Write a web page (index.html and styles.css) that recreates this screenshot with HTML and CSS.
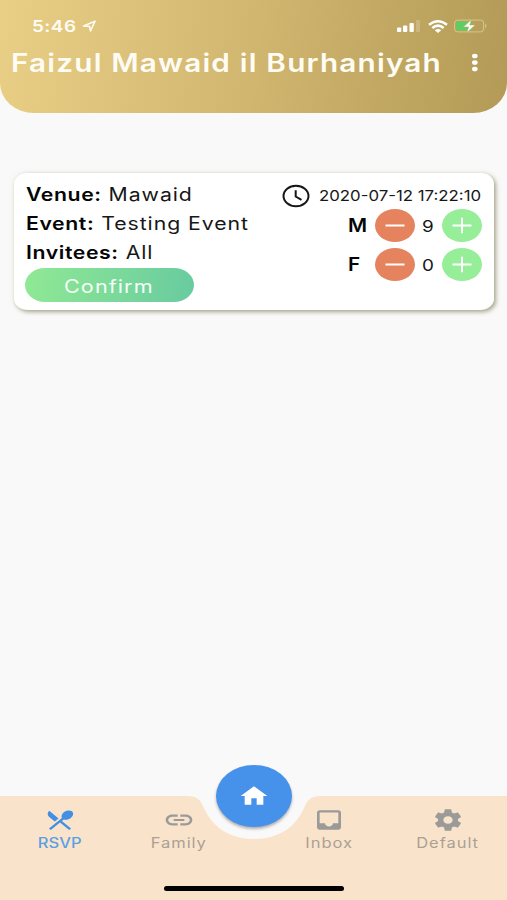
FILE: index.html
```html
<!DOCTYPE html>
<html lang="en">
<head>
<meta charset="utf-8">
<title>Faizul Mawaid il Burhaniyah</title>
<link rel="stylesheet" href="styles.css">
</head>
<body>
<div class="app">
  <header class="header">
    <div class="status">
      <span class="wide time">5:46</span>
      <svg class="location" width="15" height="13" viewBox="0 0 15 13"><path d="M1.5 6 13 1.2 8.500 11 7.500 6.400z" fill="none" stroke="#fffbf0" stroke-width="1.6" stroke-linejoin="round"/></svg>
      <svg class="signal" width="24" height="12" viewBox="0 0 24 12" fill="#fff"><rect x="0" y="7.5" width="4.300" height="4.5" rx="1"/><rect x="6" y="5.5" width="4.300" height="6.5" rx="1"/><rect x="12.500" y="3" width="4.300" height="9" rx="1"/><rect x="19" y="0" width="4" height="12" rx="1" opacity=".2"/></svg>
      <svg class="wifi" width="20" height="13" viewBox="0 0 20 13" fill="none" stroke="#fff" stroke-width="2.500"><path d="M1 4.800Q10-2.200 19 4.800M4.300 8Q10 3.200 15.700 8"/><path d="M6.700 10.200Q10 7.600 13.300 10.200L10 13z" fill="#fff" stroke="none"/></svg>
      <svg class="battery" width="34" height="14" viewBox="0 0 34 14"><rect x=".6" y="1.100" width="29" height="11.800" rx="3" fill="none" stroke="#e2d3a4" stroke-opacity=".75"/><path d="M4 2.500h14v9H4q-2 0-2-2v-5q0-2 2-2z" fill="#5fce62"/><path d="M31.200 4.600q2.600 2.400 0 4.800z" fill="#e2d3a4" opacity=".8"/><path d="M17.500.6 9.300 8h5.200l-1.600 5.600L21.300 6h-5.500z" fill="#fff" stroke="#bda660" stroke-width=".6"/></svg>
    </div>
    <div class="titlebar">
      <h1 class="wide title">Faizul Mawaid il Burhaniyah</h1>
      <svg class="more" width="8" height="20" viewBox="0 0 8 20" fill="#fff"><ellipse cx="3.800" cy="3" rx="2.800" ry="2.300"/><ellipse cx="3.800" cy="9.500" rx="2.800" ry="2.300"/><ellipse cx="3.800" cy="16" rx="2.800" ry="2.300"/></svg>
    </div>
  </header>
  <main class="content">
    <article class="card">
      <div class="details">
        <p class="wide line"><b>Venue:</b> Mawaid</p>
        <p class="wide line"><b>Event:</b> Testing Event</p>
        <p class="wide line"><b>Invitees:</b> All</p>
        <button class="confirm"><span class="wide">Confirm</span></button>
      </div>
      <div class="side">
        <div class="date">
          <svg width="28" height="24" viewBox="0 0 28 24" fill="none" stroke="#161616" stroke-width="2"><ellipse cx="14" cy="12" rx="12.500" ry="10.300"/><path d="M13.700 6.300v6.200l5.800 3.300"/></svg>
          <time class="wide">2020-07-12 17:22:10</time>
        </div>
        <div class="counter">
          <b class="wide sex">M</b>
          <button class="round minus"><svg width="40" height="33" viewBox="0 0 40 33"><path d="M10.500 16.500h19"/></svg></button>
          <span class="wide count">9</span>
          <button class="round plus"><svg width="40" height="33" viewBox="0 0 40 33"><path d="M10.500 16.500h19M20 8.700v15.600"/></svg></button>
        </div>
        <div class="counter">
          <b class="wide sex">F</b>
          <button class="round minus"><svg width="40" height="33" viewBox="0 0 40 33"><path d="M10.500 16.500h19"/></svg></button>
          <span class="wide count">0</span>
          <button class="round plus"><svg width="40" height="33" viewBox="0 0 40 33"><path d="M10.500 16.500h19M20 8.700v15.600"/></svg></button>
        </div>
      </div>
    </article>
  </main>
  <nav class="tabbar">
    <svg class="shape" width="507" height="104" viewBox="0 0 507 104"><path d="M0 0H187C196 0 200 3 203 10C212 31 229 43 254 43S296 31 305 10C308 3 312 0 321 0H507V104H0z" fill="#f9e4cb"/></svg>
    <a class="tab active">
      <svg width="32" height="26" viewBox="0 0 24 24" preserveAspectRatio="none"><path d="m8.100 13.340 2.830-2.830L3.910 3.500a4.008 4.008 0 0 0 0 5.660l4.190 4.180zm6.780-1.810c1.530.71 3.680.21 5.270-1.380 1.910-1.910 2.280-4.650.81-6.120-1.460-1.460-4.200-1.100-6.120.81-1.590 1.590-2.090 3.740-1.380 5.270L3.700 19.870l1.410 1.410L12 14.410l6.880 6.880 1.410-1.410L13.410 13l1.470-1.470z"/></svg>
      <span class="wide">RSVP</span>
    </a>
    <a class="tab">
      <svg width="32" height="26" viewBox="0 0 24 24" preserveAspectRatio="none"><path d="M3.900 12c0-1.710 1.390-3.100 3.100-3.100h4V7H7c-2.760 0-5 2.240-5 5s2.240 5 5 5h4v-1.900H7c-1.710 0-3.100-1.390-3.100-3.100zM8 13h8v-2H8v2zm9-6h-4v1.900h4c1.710 0 3.100 1.390 3.100 3.100s-1.390 3.100-3.100 3.100h-4V17h4c2.760 0 5-2.240 5-5s-2.240-5-5-5z"/></svg>
      <span class="wide">Family</span>
    </a>
    <button class="home"><svg width="32" height="26" viewBox="0 0 24 24" preserveAspectRatio="none"><path d="M10 20v-6h4v6h5v-8h3L12 3 2 12h3v8z"/></svg></button>
    <a class="tab inbox">
      <svg width="32" height="26" viewBox="0 0 24 24" preserveAspectRatio="none"><path d="M19 3H4.990c-1.110 0-1.980.89-1.980 2L3 19c0 1.100.88 2 1.990 2H19c1.100 0 2-.9 2-2V5c0-1.110-.9-2-2-2zm0 12h-4c0 1.660-1.350 3-3 3s-3-1.340-3-3H4.990V5H19v10z"/></svg>
      <span class="wide">Inbox</span>
    </a>
    <a class="tab">
      <svg width="32" height="26" viewBox="0 0 24 24" preserveAspectRatio="none"><path d="M19.430 12.980c.04-.32.070-.64.070-.98s-.03-.66-.07-.98l2.110-1.650c.19-.15.240-.42.120-.64l-2-3.460c-.12-.22-.39-.3-.61-.22l-2.490 1c-.52-.4-1.080-.73-1.690-.98l-.38-2.650C14.460 2.180 14.250 2 14 2h-4c-.25 0-.46.18-.49.42l-.38 2.650c-.61.250-1.170.59-1.690.98l-2.490-1c-.23-.09-.49 0-.61.220l-2 3.460c-.13.220-.07.490.12.640l2.110 1.650c-.04.320-.07.650-.07.980s.03.660.07.980l-2.110 1.650c-.19.150-.24.420-.12.640l2 3.460c.12.220.39.300.61.220l2.490-1c.52.400 1.080.730 1.690.980l.38 2.650c.03.240.24.420.49.420h4c.25 0 .46-.18.490-.42l.38-2.650c.61-.25 1.170-.59 1.690-.98l2.490 1c.23.090.49 0 .61-.22l2-3.460c.12-.22.070-.49-.12-.64l-2.110-1.650zM12 15.500c-1.930 0-3.500-1.570-3.500-3.500s1.570-3.500 3.500-3.500 3.500 1.570 3.500 3.500-1.570 3.500-3.500 3.500z"/></svg>
      <span class="wide">Default</span>
    </a>
    <span class="indicator"></span>
  </nav>
</div>
</body>
</html>
```
FILE: styles.css
```css
* { box-sizing: border-box; }
body { margin: 0; background: #f9f9f9; font-family: Inter, "Liberation Sans", sans-serif; }
h1, p { margin: 0; }
button { border: 0; padding: 0; font: inherit; }
svg { display: block; flex: none; }
.app { width: 507px; height: 900px; display: flex; flex-direction: column; overflow: hidden; }
.wide { display: block; white-space: nowrap; transform: scaleX(1.18); transform-origin: left center; }

.header { height: 113px; border-radius: 0 0 34px 34px / 0 0 30px 30px; background: linear-gradient(97deg, #e9ce86 0%, #d0b66f 50%, #b39a56 100%); color: #fffcf3; }
.status { height: 42px; padding: 19px 19px 0 32px; display: flex; align-items: flex-start; }
.time { width: 50px; font-size: 16px; line-height: 15px; font-weight: 600; letter-spacing: .4px; }
.location { margin-top: 1px; }
.signal { margin: 1px 7px 0 auto; }
.wifi { margin: 1px 6px 0 0; }
.titlebar { display: flex; padding: 0 28px 0 11px; justify-content: space-between; }
.title { font-size: 25px; line-height: 43px; font-weight: 600; letter-spacing: 1px; transform: scaleX(1.188); }
.more { margin-top: 11px; }

.content { flex: 1; padding: 60px 13px 0 14px; }
.card { height: 137px; padding: 7px 12px 0; display: flex; justify-content: space-between; background: #fff; border-radius: 13px 13px 14px 14px / 11px; box-shadow: 2px 2px 4px rgba(110, 108, 60, .55), 0 0 5px rgba(120, 120, 80, .12); color: #171717; }
.details { width: 240px; }
.line { font-size: 18px; line-height: 29px; letter-spacing: .8px; }
.line b { font-weight: 600; letter-spacing: .5px; color: #050505; }
.confirm { display: flex; align-items: center; width: 169px; height: 34px; margin: 1px 0 0 -1px; padding: 2px 0 0 39px; border-radius: 20px / 17px; background: linear-gradient(100deg, #90e994, #68cba0); color: #f5fff5; font-size: 18px; letter-spacing: .9px; }
.confirm .wide { transform: scaleX(1.2); }
.side { width: 200px; }
.date { display: flex; align-items: center; height: 29px; padding-top: 2px; font-size: 14px; }
.date time { margin-left: 9px; transform: scaleX(1.2); }
.counter { display: flex; align-items: center; height: 33px; margin-bottom: 6px; padding-left: 66px; font-size: 18px; }
.sex { width: 27px; font-weight: 600; color: #050505; transform: scaleX(1.15); }
.count { width: 27px; padding-left: 6px; font-size: 16px; }
.round { width: 40px; height: 33px; border-radius: 50%; stroke: #fff; stroke-width: 2; fill: none; }
.minus { background: #e6835f; }
.plus { background: #96ee98; }

.tabbar { position: relative; height: 104px; display: flex; color: #aba096; fill: #9b9a98; }
.shape { position: absolute; left: 0; top: 0; }
.tab { position: relative; flex: none; width: 119px; padding: 11px 0 0 1px; font-size: 14px; line-height: 20px; letter-spacing: .8px; display: flex; flex-direction: column; align-items: center; }
.tab .wide { transform-origin: center; }
.active { color: #5b9fe3; fill: #438fe6; font-weight: 500; letter-spacing: .1px; }
.home { position: absolute; left: 216px; top: -31px; width: 76px; height: 62px; border-radius: 50%; background: #4692eb; fill: #fff; display: grid; place-items: center; box-shadow: 0 2px 3px rgba(0, 0, 0, .3); }
.inbox { margin-left: 31px; }
.indicator { position: absolute; left: 164px; top: 90px; width: 180px; height: 5px; border-radius: 3px; background: #000; }
```
